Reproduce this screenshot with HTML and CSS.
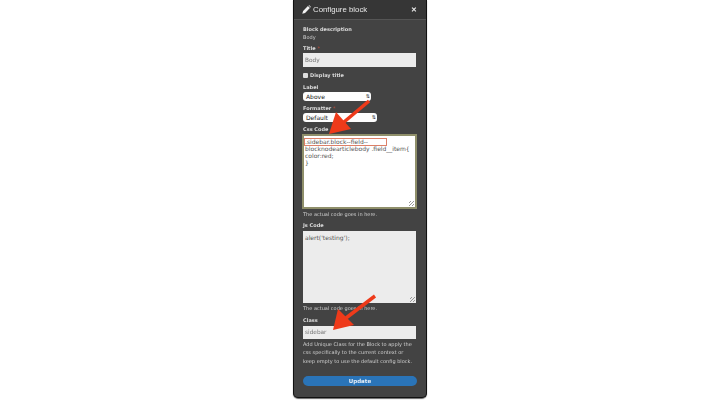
FILE: index.html
```html
<!DOCTYPE html>
<html lang="en">
<head>
    <meta charset="UTF-8">
    <title>Configure block</title>
    <link rel="stylesheet" href="styles.css">
</head>
<body>
    <div class="dialog">
        <div class="dialog-title">
            <svg class="pencil" viewBox="0 0 10 10"><path d="M0.3 9.7 L1.2 6.6 L6.6 1.2 L8.8 3.4 L3.4 8.8 Z M7.3 0.5 L7.8 0 L10 2.2 L9.5 2.7 Z" fill="#f2f2f2"/></svg>
            <span>Configure block</span>
            <span class="close">&#10005;</span>
        </div>
        <div class="dialog-body">
            <div class="label">Block description</div>
            <div class="value">Body</div>

            <label class="label title-label">Title <span class="required">*</span></label>
            <input class="text-input" type="text" value="Body">

            <div class="checkbox-row">
                <span class="checkbox"></span>
                <span class="label">Display title</span>
            </div>

            <label class="label">Label</label>
            <div class="select select-label">Above<span class="arrows">&#8645;</span></div>

            <label class="label formatter-label">Formatter <span class="required">*</span></label>
            <div class="select select-formatter">Default<span class="arrows">&#8645;</span></div>

            <label class="label css-label">Css Code</label>
            <div class="code-box code-focus">.sidebar.block--field--<br>blocknodearticlebody .field__item{<br>color:red;<br>}<span class="grip"></span></div>
            <div class="help">The actual code goes in here.</div>

            <label class="label js-label">Js Code</label>
            <div class="code-box code-plain">alert('testing');<span class="grip"></span></div>
            <div class="help">The actual code goes in here.</div>

            <label class="label class-label">Class</label>
            <input class="text-input class-input" type="text" value="sidebar">
            <div class="help class-help">Add Unique Class for the Block to apply the css specifically to the current context or keep empty to use the default config block.</div>

            <button class="update">Update</button>
        </div>
        <div class="highlight"></div>
    </div>

    <svg class="arrows-overlay" viewBox="0 0 720 400">
        <path d="M369 101 L344 122" stroke="#ee3a1a" stroke-width="3.5" fill="none"/>
        <path d="M329 134 L336 112 L351 129 Z" fill="#ee3a1a"/>
        <path d="M375 296 L346 318" stroke="#ee3a1a" stroke-width="3.5" fill="none"/>
        <path d="M333 330 L338 309 L354 325 Z" fill="#ee3a1a"/>
    </svg>
</body>
</html>
```

FILE: styles.css
```css
body {
    margin: 0;
    height: 400px;
    overflow: hidden;
    background: white;
    font-family: "DejaVu Sans", sans-serif;
    font-size: 5px;
    color: #e6e6e6;
    filter: blur(0.3px);
}
.dialog {
    position: relative;
    box-sizing: border-box;
    width: 134px;
    height: 398px;
    margin: 0 auto;
    background: #434343;
    border: 1px solid #111;
    border-top: none;
    border-radius: 0 0 5px 5px;
    box-shadow: 0 1px 1px rgba(0,0,0,0.6);
}
.dialog-title {
    display: flex;
    align-items: center;
    height: 19px;
    padding: 0 9px 0 8px;
    background: #363636;
    border-bottom: 1px solid #555;
    font-family: "Liberation Sans", sans-serif;
    font-size: 7.8px;
    color: #e8e8e8;
}
.pencil {
    width: 9px;
    height: 9px;
    margin-right: 2px;
}
.close {
    margin-left: auto;
    font-size: 7px;
    font-weight: bold;
}
.dialog-body {
    padding: 5px 9px 0;
}
.label {
    display: block;
    height: 8px;
    line-height: 8px;
    font-weight: bold;
    color: #dcdcdc;
    white-space: nowrap;
}
.required {
    color: #a84a3a;
}
.value {
    height: 8px;
    line-height: 8px;
    color: #d0d0d0;
}
.title-label {
    margin-top: 3px;
}
.text-input {
    display: block;
    box-sizing: border-box;
    width: 113px;
    height: 14px;
    margin-top: 1px;
    padding: 0 2px;
    border: none;
    background: #ececec;
    font-family: "DejaVu Sans", sans-serif;
    font-size: 5.8px;
    color: #777;
}
.checkbox-row {
    display: flex;
    align-items: center;
    gap: 2px;
    margin-top: 4px;
    margin-bottom: 4px;
}
.checkbox {
    width: 5px;
    height: 5px;
    background: #ddd;
    border-radius: 1px;
}
.select {
    position: relative;
    box-sizing: border-box;
    height: 9px;
    line-height: 9px;
    margin-top: 1px;
    padding-left: 3px;
    background: white;
    border-radius: 3px;
    color: #222;
    font-size: 6px;
    opacity: 0.99;
}
.select-label {
    width: 68px;
}
.select-formatter {
    width: 74px;
}
.arrows {
    position: absolute;
    right: 1px;
    top: 0;
    font-size: 5px;
}
.formatter-label {
    margin-top: 3px;
}
.css-label {
    margin-top: 3px;
}
.code-box {
    position: relative;
    box-sizing: border-box;
    width: 113px;
    line-height: 7px;
    color: #555;
    font-size: 6px;
}
.code-focus {
    width: 115px;
    height: 75px;
    margin: 1px 0 0 -1px;
    padding: 2px 1px;
    background: white;
    border: 2px solid #8f8f6a;
}
.code-plain {
    height: 72px;
    margin-top: 2px;
    padding: 3px 2px;
    background: #ececec;
}
.grip {
    position: absolute;
    right: 1px;
    bottom: 1px;
    width: 5px;
    height: 5px;
    background: repeating-linear-gradient(135deg, transparent 0, transparent 1px, #999 1px, #999 2px);
}
.help {
    margin-top: 1px;
    line-height: 8.5px;
    color: #cfcfcf;
}
.js-label {
    margin-top: 2px;
}
.class-label {
    margin-top: 4px;
}
.class-input {
    margin-top: 1.5px;
    height: 13px;
}
.class-help {
    margin-top: 1px;
    width: 113px;
}
.update {
    display: block;
    width: 114px;
    height: 10px;
    margin-top: 10.5px;
    padding: 0;
    border: none;
    border-radius: 5px;
    background: #2a74b8;
    color: #e8f0f8;
    font-family: "DejaVu Sans", sans-serif;
    font-size: 5.5px;
    font-weight: bold;
}
.highlight {
    position: absolute;
    left: 10px;
    top: 138px;
    width: 81px;
    height: 6px;
    border: 1px solid #dc8068;
}
.arrows-overlay {
    position: absolute;
    left: 0;
    top: 0;
    width: 720px;
    height: 400px;
}
```
